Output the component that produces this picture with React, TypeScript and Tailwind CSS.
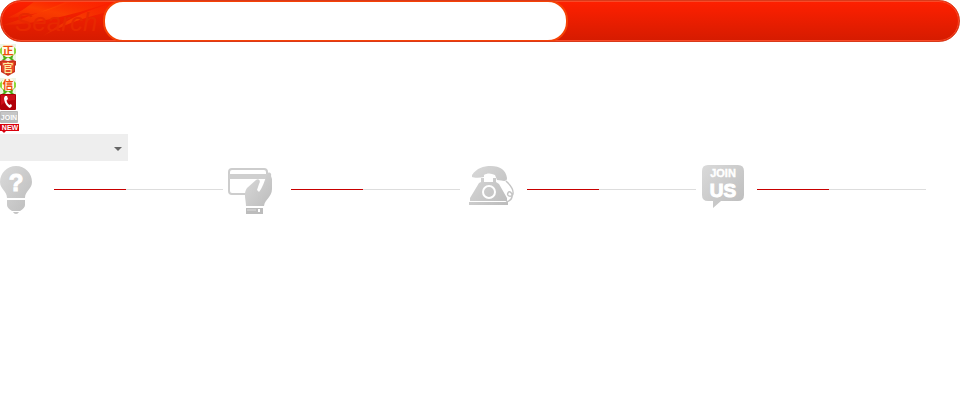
import type { ReactNode } from "react";

function Glow() {
  return (
    <svg className="absolute top-0 left-0" width="112" height="40" viewBox="0 0 112 40" aria-hidden="true">
      <defs>
        <linearGradient id="ray" x1="0" y1="1" x2="1" y2="0">
          <stop offset="0" stopColor="#ff5a00" stopOpacity="0.1" />
          <stop offset="0.5" stopColor="#ff5000" stopOpacity="0.6" />
          <stop offset="1" stopColor="#ff3c00" stopOpacity="0" />
        </linearGradient>
      </defs>
      <path d="M2 24C20 18 44 10 66 0H112C80 12 34 24 2 24Z" fill="url(#ray)" />
      <path d="M6 17C18 12 26 6 34 0H72C48 10 24 16 6 17Z" fill="url(#ray)" />
      <path d="M42 35C60 22 82 10 112 2V10C86 15 62 24 42 35Z" fill="url(#ray)" />
    </svg>
  );
}

function SearchBar() {
  return (
    <form className="relative flex h-[42px] overflow-hidden rounded-full border border-[#d93a1a] bg-linear-to-b from-[#ff2000] to-[#d51b00]">
      <Glow />
      <div className="pointer-events-none absolute inset-0 rounded-full border border-[#f84a28]" />
      <label
        htmlFor="search"
        className="relative w-[102px] shrink-0 pl-[14px] font-['Liberation_Sans',sans-serif] text-[26px] leading-[42px] text-[#e82800] italic"
      >
        Search
      </label>
      <input
        id="search"
        type="text"
        className="relative -my-px h-[42px] w-[465px] rounded-[20px] border-2 border-[#f54206] bg-white px-4 text-sm outline-none"
      />
    </form>
  );
}

function SealBadge({ label }: { label: string }) {
  return (
    <svg className="block" width="16" height="17" viewBox="0 0 16 17">
      <rect y="1" width="16" height="16" fill="#eef5e4" />
      <path d="M3 3L0 6V10L3 13L5 15H11L13 13L16 10V6L13 3Z" fill="#8fd83a" />
      <path d="M3 12L5 17H2L4 15ZM13 12L11 17H14L12 15ZM4 12H7V15L5 17L3 14ZM12 12H9V15L11 17L13 14Z" fill="#4fae18" />
      <path d="M5 1H11L14 4V11L10 14H6L2 11V4Z" fill="#fffbe8" />
      <text x="8" y="12" textAnchor="middle" className="fill-[#f04a08] font-['Noto_Sans_CJK_SC',sans-serif] text-[11px] font-bold">
        {label}
      </text>
    </svg>
  );
}

function OfficialBadge() {
  return (
    <svg className="block" width="16" height="17" viewBox="0 0 16 17">
      <path d="M0 1L3 0L8 1L13 0L16 1V5L15 6V12L8 16L1 12V6L0 5Z" fill="#c9301c" />
      <path d="M2 2H14V11L8 14L2 11Z" fill="#e64a2a" />
      <text x="8" y="12" textAnchor="middle" className="fill-[#fff0a0] font-['Noto_Sans_CJK_SC',sans-serif] text-[11px] font-medium">
        官
      </text>
    </svg>
  );
}

function PhoneBadge() {
  return (
    <svg className="block" width="16" height="16" viewBox="0 0 16 16">
      <rect width="16" height="16" rx="1" fill="#b00008" />
      <path d="M1 1H15V6C10 6 5 8 1 11Z" fill="#cc1018" />
      <path d="M5 2L7 2L8 5L6.5 6.5C7 8.5 8 10 9.5 11L11 10L12 12L10 14C7 13 4 8 4 4Z" fill="#fff" />
    </svg>
  );
}

function JoinBadge() {
  return (
    <svg className="block" width="18" height="13" viewBox="0 0 18 13">
      <rect y="1" width="18" height="12" rx="1" fill="#b8b8b8" />
      <rect x="1" y="2" width="16" height="4" fill="#c6c6c6" />
      <text x="9" y="10" textAnchor="middle" className="fill-white font-['Liberation_Sans',sans-serif] text-[7px] font-bold">
        JOIN
      </text>
    </svg>
  );
}

function NewBadge() {
  return (
    <svg className="block" width="19" height="10" viewBox="0 0 19 10">
      <path d="M0 1H19V8H6L4 10L2 8H0Z" fill="#d9000d" />
      <text x="10" y="7" textAnchor="middle" className="fill-white font-['Liberation_Sans',sans-serif] text-[7px] font-bold">
        NEW
      </text>
    </svg>
  );
}

function GreyFill({ id }: { id: string }) {
  return (
    <defs>
      <linearGradient id={id} x1="0" y1="0" x2="1" y2="1">
        <stop offset="0" stopColor="#dadada" />
        <stop offset="1" stopColor="#bcbcbc" />
      </linearGradient>
    </defs>
  );
}

function BulbIcon() {
  return (
    <svg width="32" height="50" viewBox="0 0 32 50">
      <GreyFill id="bulb" />
      <path
        d="M16 1C7 1 0 8 0 17C0 24 7 26 7 33H25C25 26 32 24 32 17C32 8 25 1 16 1ZM7 35H25V40Q25 43 20 46H12Q7 43 7 40ZM13 47H19Q18 49 16 49Q14 49 13 47Z"
        fill="url(#bulb)"
      />
      <text
        x="16"
        y="26"
        textAnchor="middle"
        className="fill-white stroke-white stroke-1 font-['Liberation_Sans',sans-serif] text-[24px] font-bold"
      >
        ?
      </text>
    </svg>
  );
}

function CardIcon() {
  return (
    <svg width="44" height="50" viewBox="0 0 44 50">
      <GreyFill id="card" />
      <rect x="1" y="4" width="38" height="25" rx="3" fill="#fff" stroke="#cdcdcd" strokeWidth="2" />
      <path d="M1 9H39V14H1Z" fill="#cfcfcf" />
      <path
        d="M18 41C18 34 15 29 19 23L28 15C31 13 33 16 31 19L29 25L31 27C34 24 37 15 39 9C41 6 44 8 43 11L44 14V24C44 32 37 34 36 41Z"
        fill="url(#card)"
      />
      <path d="M18 43H35V49H18Z" fill="#bcbcbc" />
      <path d="M30 44H32V47H30Z" fill="#fff" />
      <path d="M19 45H28" stroke="#dedede" />
    </svg>
  );
}

function TelephoneIcon() {
  return (
    <svg width="46" height="50" viewBox="0 0 46 50">
      <GreyFill id="telephone" />
      <path
        d="M3 10C8 3 14 1 22 1C31 1 37 5 38 13C38 17 35 16 28 15L26 10C22 8 18 8 15 10V12C11 13 5 13 3 12ZM12 13H15V17H24V13H27V17L30 19L38 33V36H1V33L10 18L12 17ZM0 37H39V40H0Z"
        fill="url(#telephone)"
      />
      <circle cx="20" cy="27" r="6" fill="none" stroke="#fff" strokeWidth="2" />
      <path
        d="M37 16C40 19 45 23 44 29C43 33 37 31 39 28C40 25 44 28 43 32C42 36 40 36 37 37"
        fill="none"
        stroke="#c4c4c4"
        strokeWidth="1.4"
      />
    </svg>
  );
}

function JoinUsIcon() {
  return (
    <svg width="42" height="50" viewBox="0 0 42 50">
      <GreyFill id="join-us" />
      <path d="M6 0H36Q42 0 42 6V30Q42 36 36 36H19L11 43V36H6Q0 36 0 30V6Q0 0 6 0Z" fill="url(#join-us)" />
      <g textAnchor="middle" className="fill-white stroke-white font-['Liberation_Sans',sans-serif] font-bold">
        <text x="21" y="12" strokeWidth="0.4" className="text-[11px]">
          JOIN
        </text>
        <text x="21" y="32" strokeWidth="1" className="text-[19px]">
          US
        </text>
      </g>
    </svg>
  );
}

function Step({ icon, slot }: { icon: ReactNode; slot: string }) {
  return (
    <li className="flex">
      <div className={slot}>{icon}</div>
      <div className="mt-6 flex h-px w-[169px] bg-[#dddddd]">
        <div className="w-[72px] bg-[#c80000]" />
      </div>
    </li>
  );
}

export default function App() {
  return (
    <main className="bg-white font-['Liberation_Sans','Noto_Sans_CJK_SC',sans-serif]">
      <SearchBar />
      <div className="flex flex-col items-start pt-px pb-px">
        <SealBadge label="正" />
        <OfficialBadge />
        <SealBadge label="信" />
        <PhoneBadge />
        <JoinBadge />
        <NewBadge />
      </div>
      <div className="relative w-32">
        <select aria-label="Options" className="block h-[27px] w-full appearance-none bg-[#eeeeee] px-2 text-xs outline-none" />
        <svg className="pointer-events-none absolute top-3 right-1.5" width="8" height="5" viewBox="0 0 8 5">
          <path d="M0 1H8L4 5Z" fill="#666" />
        </svg>
      </div>
      <ul className="flex pt-1">
        <Step icon={<BulbIcon />} slot="w-[54px]" />
        <Step icon={<CardIcon />} slot="w-[68px] pl-[5px]" />
        <Step icon={<TelephoneIcon />} slot="w-[67px] pl-[9px]" />
        <Step icon={<JoinUsIcon />} slot="w-[61px] pl-[6px]" />
      </ul>
    </main>
  );
}
